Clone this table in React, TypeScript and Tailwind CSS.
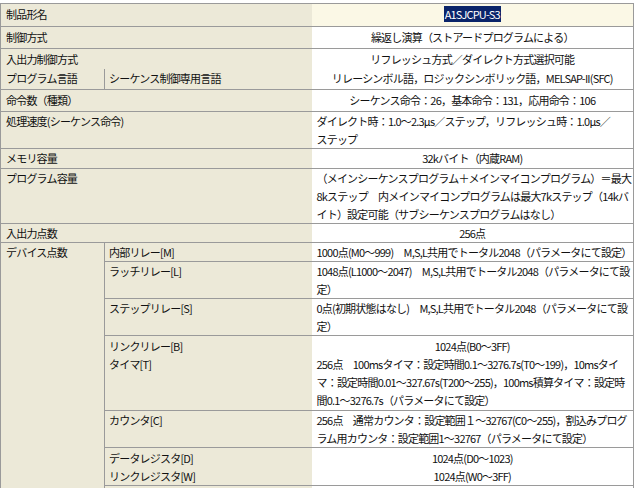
const label = 'bg-[#ECE9D8] align-top px-[5px] text-left';
const sub = 'bg-[#ECE9D8] align-top px-[4px] text-left border-l border-[#9a9a9a]';
const val = 'bg-white align-top px-[5px]';
const line = 'border-b border-[#9a9a9a]';

export default function App() {
  return (
    <div className="h-[488px] w-[637px] overflow-hidden bg-white pt-[3px]">
      <table className="w-[633px] table-fixed border-collapse border-x border-t border-[#9a9a9a] font-['Noto_Sans_CJK_JP',sans-serif] text-[11px] leading-[18px] tracking-[-0.8px] text-[#111]">
        <colgroup>
          <col className="w-[104px]" />
          <col className="w-[207px]" />
          <col className="w-[322px]" />
        </colgroup>
        <tbody>
          <tr className="h-[23px]">
            <td colSpan={2} className={`${label} ${line} pt-[1px]`}>制品形名</td>
            <td className={`${line} align-top pt-[1px] text-center bg-[#FBF8E6]`}>
              <span className="bg-[#0A246A] px-[1px] text-white">A1SJCPU-S3</span>
            </td>
          </tr>
          <tr className="h-[22px]">
            <td colSpan={2} className={`${label} ${line} pt-[1px]`}>制御方式</td>
            <td className={`${val} ${line} pt-[1px] text-center`}>繰返し演算（ストアードプログラムによる）</td>
          </tr>
          <tr className="h-[20px]">
            <td colSpan={2} className={`${label} pt-[1px]`}>入出力制御方式</td>
            <td className={`${val} pt-[1px] text-center`}>リフレッシュ方式／ダイレクト方式選択可能</td>
          </tr>
          <tr className="h-[21px]">
            <td className={`${label} ${line}`}>プログラム言語</td>
            <td className={`${sub} ${line}`}>シーケンス制御専用言語</td>
            <td className={`${val} ${line} text-center whitespace-nowrap`}>リレーシンボル語，ロジックシンボリック語，MELSAP-II(SFC)</td>
          </tr>
          <tr className="h-[22px]">
            <td colSpan={2} className={`${label} ${line} pt-[1px]`}>命令数（種類）</td>
            <td className={`${val} ${line} pt-[1px] text-center`}>シーケンス命令：26，基本命令：131，応用命令：106</td>
          </tr>
          <tr className="h-[36px]">
            <td colSpan={2} className={`${label} ${line}`}>処理速度(シーケンス命令)</td>
            <td className={`${val} ${line} whitespace-nowrap`}>
              ダイレクト時：1.0～2.3μs／ステップ，リフレッシュ時：1.0μs／<br />ステップ
            </td>
          </tr>
          <tr className="h-[20px]">
            <td colSpan={2} className={`${label} ${line}`}>メモリ容量</td>
            <td className={`${val} ${line} text-center`}>32kバイト（内蔵RAM)</td>
          </tr>
          <tr className="h-[54px]">
            <td colSpan={2} className={`${label} ${line}`}>プログラム容量</td>
            <td className={`${val} ${line} whitespace-nowrap`}>
              （メインシーケンスプログラム＋メインマイコンプログラム）＝最大<br />
              8kステップ　内メインマイコンプログラムは最大7kステップ（14kバ<br />
              イト）設定可能（サブシーケンスプログラムはなし）
            </td>
          </tr>
          <tr className="h-[19px]">
            <td colSpan={2} className={`${label} ${line}`}>入出力点数</td>
            <td className={`${val} ${line} text-center`}>256点</td>
          </tr>
          <tr className="h-[19px]">
            <td rowSpan={9} className={label}>デバイス点数</td>
            <td className={`${sub} ${line}`}>内部リレー[M]</td>
            <td className={`${val} ${line} whitespace-nowrap`}>1000点(M0～999)　M,S,L共用でトータル2048（パラメータにて設定）</td>
          </tr>
          <tr className="h-[37px]">
            <td className={`${sub} ${line}`}>ラッチリレー[L]</td>
            <td className={`${val} ${line} whitespace-nowrap`}>
              1048点(L1000～2047)　M,S,L共用でトータル2048（パラメータにて設<br />定）
            </td>
          </tr>
          <tr className="h-[37px]">
            <td className={`${sub} ${line}`}>ステップリレー[S]</td>
            <td className={`${val} ${line} whitespace-nowrap`}>
              0点(初期状態はなし)　M,S,L共用でトータル2048（パラメータにて設<br />定）
            </td>
          </tr>
          <tr className="h-[19px]">
            <td className={`${sub} pt-[1px]`}>リンクリレー[B]</td>
            <td className={`${val} pt-[1px] text-center`}>1024点(B0～3FF)</td>
          </tr>
          <tr className="h-[55px]">
            <td className={`${sub} ${line}`}>タイマ[T]</td>
            <td className={`${val} ${line} whitespace-nowrap`}>
              256点　100msタイマ：設定時間0.1～3276.7s(T0～199)，10msタイ<br />
              マ：設定時間0.01～327.67s(T200～255)，100ms積算タイマ：設定時<br />
              間0.1～3276.7s（パラメータにて設定）
            </td>
          </tr>
          <tr className="h-[37px]">
            <td className={`${sub} ${line}`}>カウンタ[C]</td>
            <td className={`${val} ${line} whitespace-nowrap`}>
              256点　通常カウンタ：設定範囲１～32767(C0～255)，割込みプログ<br />
              ラム用カウンタ：設定範囲1～32767（パラメータにて設定）
            </td>
          </tr>
          <tr className="h-[19px]">
            <td className={`${sub} pt-[1px]`}>データレジスタ[D]</td>
            <td className={`${val} pt-[1px] text-center`}>1024点(D0～1023)</td>
          </tr>
          <tr className="h-[18px]">
            <td className={`${sub} ${line}`}>リンクレジスタ[W]</td>
            <td className={`${val} ${line} text-center`}>1024点(W0～3FF)</td>
          </tr>
          <tr className="h-[30px]">
            <td className={sub}></td>
            <td className={val}></td>
          </tr>
        </tbody>
      </table>
    </div>
  );
}
